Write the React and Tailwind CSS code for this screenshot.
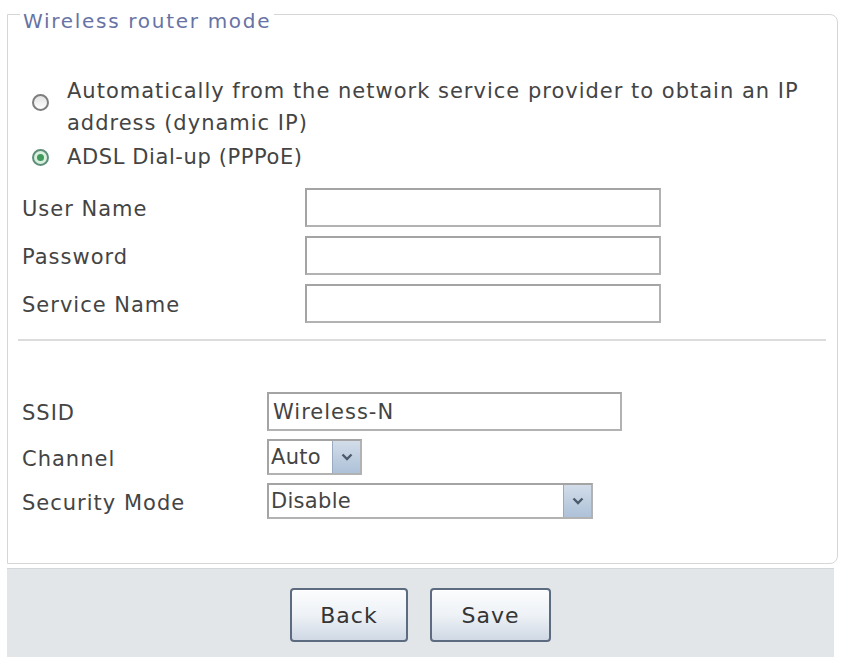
import React from 'react';

// Radio bullet, drawn with CSS circles
function Radio({ checked }) {
    if (checked) {
        return (
            <span className="flex w-[17px] h-[17px] rounded-full border-2 border-[#5e8f7a] bg-[#d9f0df] items-center justify-center">
                <span className="w-[7px] h-[7px] rounded-full bg-[#3f9a5c]" />
            </span>
        );
    }
    return (
        <span className="block w-[17px] h-[17px] rounded-full border-2 border-[#7e7e7e] bg-gradient-to-b from-[#e2e2e2] to-white" />
    );
}

function TextInput({ width, value = '' }) {
    return (
        <div
            className={`${width} h-full border-2 border-[#b2b2b2] border-t-[#a4a4a4] border-l-[#a4a4a4] bg-white flex items-center pl-[4px] pt-[2px] text-[#444]`}
        >
            {value}
        </div>
    );
}

function Select({ width, value }) {
    return (
        <div className={`${width} h-full flex border-2 border-[#b2b2b2] border-t-[#a4a4a4] border-l-[#a4a4a4] bg-white`}>
            <div className="flex-1 flex items-center pl-[2px] pt-[2px] text-[#444] tracking-[0.3px]">{value}</div>
            <div className="w-[28px] h-full flex items-center justify-center bg-gradient-to-b from-[#d3dde9] to-[#adc1d8] border-l border-[#9aaac0]">
                <svg width="12" height="8" viewBox="0 0 12 8">
                    <path d="M1.5 1.5 L6 6 L10.5 1.5" fill="none" stroke="#4c5a6c" strokeWidth="2.4" />
                </svg>
            </div>
        </div>
    );
}

function FormRow({ label, labelWidth, height, className = '', children }) {
    return (
        <div className={`flex items-center ${height} ${className}`}>
            <div className={`${labelWidth} pt-[5px] text-[#444]`}>{label}</div>
            {children}
        </div>
    );
}

function Button({ width, children }) {
    return (
        <button
            className={`${width} h-[54px] rounded-[4px] border-2 border-[#5d6b80] bg-gradient-to-b from-[#fbfcfd] via-[#eef2f6] to-[#cfd8e4] text-[#353535] text-[22px] tracking-[1px] shadow-[inset_0_1px_0_#ffffff]`}
        >
            {children}
        </button>
    );
}

export default function App() {
    return (
        <div className="w-[842px] h-[657px] bg-white overflow-hidden font-['DejaVu_Sans',sans-serif] text-[21px] tracking-[1px]">
            {/* Wireless router mode group */}
            <div className="relative ml-[7px] mr-[4px] mt-[14px] h-[550px] border border-[#d6d6d6] rounded-r-[8px]">
                <span className="absolute left-[12px] top-[-5px] px-[3px] bg-white leading-[22px] text-[20px] tracking-[1.7px] text-[#6773a4]">
                    Wireless router mode
                </span>

                <div className="pl-[14px] pt-[59px]">
                    {/* Connection type */}
                    <div className="flex items-start ml-[10px]">
                        <div className="mt-[20px] w-[17px]">
                            <Radio />
                        </div>
                        <div className="ml-[18px] w-[745px] leading-[32px] pt-[1px] text-[#444]">
                            Automatically from the network service provider to obtain an IP address (dynamic IP)
                        </div>
                    </div>
                    <div className="flex items-center ml-[10px] mt-[2px] h-[32px]">
                        <Radio checked />
                        <div className="ml-[18px] pt-[2px] tracking-[0.6px] text-[#444]">ADSL Dial-up (PPPoE)</div>
                    </div>

                    {/* PPPoE account */}
                    <div className="mt-[15px] flex flex-col gap-[9px]">
                        <FormRow label="User Name" labelWidth="w-[283px]" height="h-[39px]">
                            <TextInput width="w-[356px]" />
                        </FormRow>
                        <FormRow label="Password" labelWidth="w-[283px]" height="h-[39px]">
                            <TextInput width="w-[356px]" />
                        </FormRow>
                        <FormRow label="Service Name" labelWidth="w-[283px]" height="h-[39px]">
                            <TextInput width="w-[356px]" />
                        </FormRow>
                    </div>

                    <div className="-ml-[4px] mt-[16px] w-[808px] h-[2px] bg-[#dcdcdc]" />

                    {/* Wireless settings */}
                    <div className="mt-[51px] flex flex-col gap-[8px]">
                        <FormRow label="SSID" labelWidth="w-[245px]" height="h-[39px]">
                            <TextInput width="w-[355px]" value="Wireless-N" />
                        </FormRow>
                        <FormRow label="Channel" labelWidth="w-[245px]" height="h-[36px]">
                            <Select width="w-[95px]" value="Auto" />
                        </FormRow>
                        <FormRow label="Security Mode" labelWidth="w-[245px]" height="h-[36px]">
                            <Select width="w-[326px]" value="Disable" />
                        </FormRow>
                    </div>
                </div>
            </div>

            {/* Action bar */}
            <div className="ml-[7px] mr-[8px] mt-[4px] h-[89px] bg-[#e3e6e9] border-t border-[#d3d7dc] flex justify-center items-start pt-[19px] gap-[22px]">
                <Button width="w-[118px]">Back</Button>
                <Button width="w-[121px]">Save</Button>
            </div>
        </div>
    );
}
